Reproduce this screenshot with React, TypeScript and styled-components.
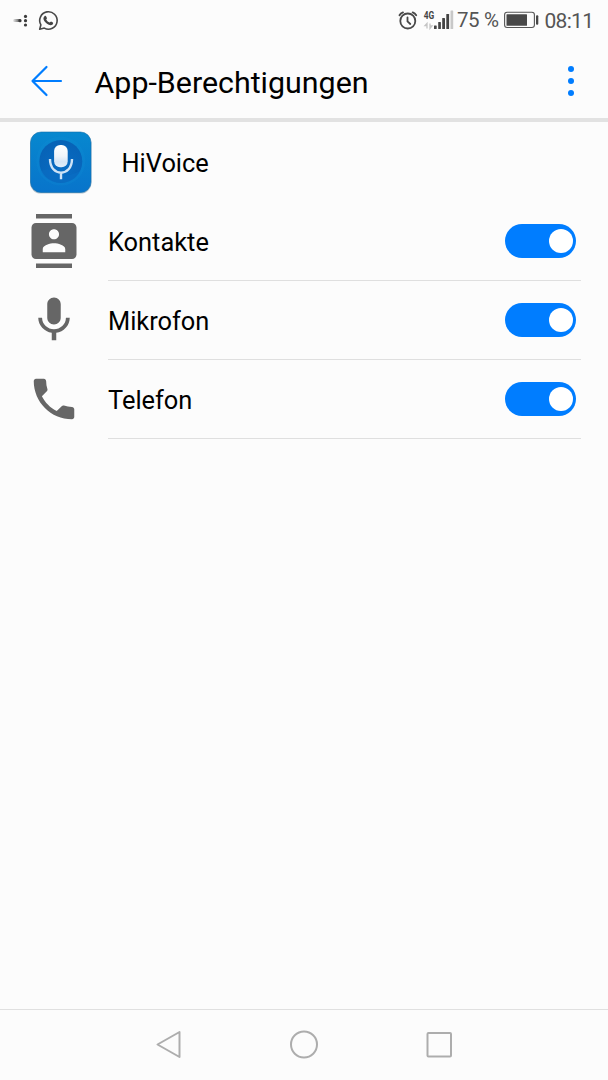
import React from 'react';
import styled, { createGlobalStyle } from 'styled-components';

const Global = createGlobalStyle`
  * { box-sizing: border-box; }
  body { margin: 0; background: #fcfcfc; font-family: Roboto, "Liberation Sans", sans-serif; color: #000; }
  svg { display: block; flex: none; }
`;

const Screen = styled.div`
  width: 608px;
  height: 1080px;
  display: flex;
  flex-direction: column;
  background: #fcfcfc;
  overflow: hidden;
`;

const StatusBar = styled.header`
  height: 42px;
  display: flex;
  justify-content: space-between;
`;

const StatusText = styled.span<{ $left: number; $width: number; $size: number; $top: number; $spacing: number }>`
  width: ${p => p.$width}px;
  margin-left: ${p => p.$left}px;
  padding-top: ${p => p.$top}px;
  font-size: ${p => p.$size}px;
  letter-spacing: ${p => p.$spacing}px;
  line-height: 24px;
  white-space: nowrap;
  color: #555;
`;

const StatusGroup = styled.div`
  display: flex;
`;

const TitleBar = styled.div`
  height: 80px;
  display: flex;
  align-items: center;
  border-bottom: 4px solid #e2e2e2;
  padding: 2px 32px 0 30px;
`;

const Title = styled.h1`
  flex: 1;
  margin: 4px 0 0 31.5px;
  font-size: 30.4px;
  line-height: 36px;
  font-weight: 400;
  white-space: nowrap;
`;

const IconButton = styled.button`
  border: 0;
  padding: 0;
  background: none;
`;

const AppRow = styled.section`
  height: 80px;
  display: flex;
  align-items: center;
  padding-left: 28px;
  gap: 27.5px;
`;

const Label = styled.span`
  padding-top: 2px;
  font-size: 25.4px;
  line-height: 30px;
  white-space: nowrap;
`;

const List = styled.ul`
  flex: 1;
  margin: 0;
  padding: 0;
  list-style: none;
`;

const Row = styled.li`
  height: 79px;
  display: flex;
  padding: 0 27px;
`;

const IconCell = styled.div<{ $top: number }>`
  width: 81px;
  padding-top: ${p => p.$top}px;
`;

const RowBody = styled.div`
  flex: 1;
  display: flex;
  align-items: center;
  justify-content: space-between;
  padding-right: 5px;
  border-bottom: 1px solid #dfdfdf;
`;

const Switch = styled.button`
  width: 71px;
  height: 34px;
  border: 0;
  border-radius: 17px;
  background: #007dff;
  padding: 0 3px;
  display: flex;
  align-items: center;
  justify-content: flex-end;
`;

const Knob = styled.span`
  width: 24px;
  height: 24px;
  border-radius: 50%;
  background: #fff;
`;

const NavBar = styled.nav`
  height: 71px;
  border-top: 1px solid #e0e0e0;
  padding-bottom: 2px;
  display: flex;
  justify-content: center;
  align-items: center;
  gap: 95px;
`;

const permissions = [
  {
    name: 'Kontakte',
    top: 12.3,
    path: 'M20 0H4v2h16V0zM4 24h16v-2H4v2zM20 4H4c-1.1 0-2 .9-2 2v12c0 1.1.9 2 2 2h16c1.1 0 2-.9 2-2V6c0-1.1-.9-2-2-2zm-8 2.75c1.24 0 2.25 1.01 2.25 2.25s-1.01 2.25-2.25 2.25S9.75 10.24 9.75 9 10.76 6.75 12 6.75zM17 17H7v-1.5c0-1.67 3.33-2.5 5-2.5s5 .83 5 2.5V17z',
  },
  {
    name: 'Mikrofon',
    top: 12,
    path: 'M12 14c1.66 0 2.99-1.34 2.99-3L15 5c0-1.66-1.34-3-3-3S9 3.34 9 5v6c0 1.66 1.34 3 3 3zm5.3-3c0 3-2.54 5.1-5.3 5.1S6.7 14 6.7 11H5c0 3.41 2.72 6.23 6 6.72V21h2v-3.28c3.28-.48 6-3.3 6-6.72h-1.7z',
  },
  {
    name: 'Telefon',
    top: 11.6,
    path: 'M6.62 10.79c1.44 2.83 3.76 5.14 6.59 6.59l2.2-2.2c.27-.27.67-.36 1.02-.24 1.12.37 2.33.57 3.57.57.55 0 1 .45 1 1V20c0 .55-.45 1-1 1-9.39 0-17-7.61-17-17 0-.55.45-1 1-1h3.5c.55 0 1 .45 1 1 0 1.25.2 2.45.57 3.57.11.35.03.74-.25 1.02l-2.2 2.2z',
  },
];

const Notifications = () => (
  <svg width="80" height="40" viewBox="0 0 80 40">
    <defs>
      <linearGradient id="trail">
        <stop offset="0" stopColor="#444" stopOpacity="0.1" />
        <stop offset="1" stopColor="#444" />
      </linearGradient>
    </defs>
    <rect x="13" y="19.1" width="8" height="3" rx="1.5" fill="url(#trail)" />
    <g fill="#3c3c3c">
      <circle cx="20" cy="20.7" r="1.6" />
      <circle cx="25.5" cy="16.4" r="1.6" />
      <circle cx="25.5" cy="20.7" r="1.6" />
      <circle cx="25.5" cy="25" r="1.6" />
    </g>
    <path d="M39.7 29.3l1.2-4.5a8.7 8.7 0 1 1 3.4 3.3z" fill="none" stroke="#484848" strokeWidth="1.6" strokeLinejoin="round" />
    <path d="M44.5 16.2c.7-.6 1.4-.4 1.7.2l.7 1.6c.2.6-.7 1.3-.7 1.6.8 1.5 2 2.5 3.4 3 .4.1 1-1.1 1.5-1l1.8.9c.6.4.1 1.8-.6 2.3-1.5 1-3.7.2-5.3-1-1.6-1.2-2.9-2.8-3.4-4.3-.4-1.3 0-2.5.9-3.3z" fill="#444" />
  </svg>
);

const AlarmAndSignal = () => (
  <svg width="65" height="40" viewBox="390 0 65 40">
    <g fill="none" stroke="#484848" strokeLinecap="round">
      <circle cx="407.8" cy="21" r="7.5" strokeWidth="1.8" />
      <path d="M399.5 15.2Q400.6 13.3 403 12.4M416.2 15.2Q415 13.3 412.7 12.4" strokeWidth="1.9" />
      <path d="M407.5 17.3V21.3L410.3 24" strokeWidth="1.8" />
    </g>
    <text x="423.7" y="18.8" fontFamily="Roboto, sans-serif" fontSize="10.5" fontWeight="700" fill="#444" textLength="10.5" lengthAdjust="spacingAndGlyphs">4G</text>
    <path d="M427 28.5V23.5L425 25.7H427M430 23.5V28.5L432 26H430" fill="none" stroke="#c4c4c4" strokeWidth="1.3" />
    <g fill="#444">
      <rect x="434" y="25.5" width="2.7" height="3.5" rx=".5" />
      <rect x="438.2" y="22" width="2.7" height="7" rx=".5" />
      <rect x="442.2" y="18" width="2.8" height="11" rx=".5" />
      <rect x="446.3" y="14" width="2.8" height="15" rx=".5" />
    </g>
    <rect x="450.5" y="10.5" width="2.7" height="18.5" rx=".5" fill="#c8c8c8" />
  </svg>
);

const Battery = () => (
  <svg width="36" height="40" viewBox="503 0 36 40">
    <rect x="504.6" y="12.3" width="29.8" height="15.2" rx="2.5" fill="none" stroke="#555" strokeWidth="1.1" />
    <rect x="506.5" y="14.2" width="20.5" height="11.6" rx=".5" fill="#484848" />
    <rect x="536" y="15.2" width="2.3" height="9.6" rx="1" fill="#484848" />
  </svg>
);

const AppIcon = () => (
  <svg width="66" height="66" viewBox="28 129 66 66">
    <defs>
      <linearGradient id="tile" x1="0" y1="0" x2="0" y2="1">
        <stop offset="0" stopColor="#0788cf" />
        <stop offset="1" stopColor="#0874cb" />
      </linearGradient>
      <radialGradient id="disc" cx=".55" cy=".7" r=".65">
        <stop offset="0" stopColor="#096cc3" />
        <stop offset="1" stopColor="#0763b7" />
      </radialGradient>
      <linearGradient id="mic" x1="0" y1="0" x2="0" y2="1">
        <stop offset="0" stopColor="#fff" />
        <stop offset=".5" stopColor="#f0f4fa" />
        <stop offset=".75" stopColor="#d6e5f5" />
        <stop offset="1" stopColor="#e2eef9" />
      </linearGradient>
    </defs>
    <rect x="30" y="132.6" width="61.5" height="61" rx="11" fill="#b7c4ce" />
    <rect x="30.5" y="132" width="60.5" height="60.5" rx="10.5" fill="url(#tile)" stroke="#1670ad" strokeWidth=".6" />
    <circle cx="60.8" cy="161" r="24.5" fill="#1591d6" opacity=".2" />
    <circle cx="60.8" cy="161.5" r="21.5" fill="url(#disc)" />
    <path d="M40.5 171Q49 167 56 173T80.5 171Q74 182.5 60.8 183 46 182 40.5 171z" fill="#0b72c8" opacity=".45" />
    <path d="M50 159C50 177.3 72 177.3 72 159M61 172.5V179.3" fill="none" stroke="#cfe3f6" strokeWidth="2.4" />
    <rect x="54.1" y="145" width="13.6" height="22.3" rx="6" fill="url(#mic)" />
  </svg>
);

export default function App() {
  return (
    <Screen>
      <Global />
      <StatusBar>
        <Notifications />
        <StatusGroup>
          <AlarmAndSignal />
          <StatusText $left={2} $width={46} $size={20.5} $top={8} $spacing={-0.4}>75 %</StatusText>
          <Battery />
          <StatusText $left={5.5} $width={63.5} $size={21} $top={9} $spacing={-0.7}>08:11</StatusText>
        </StatusGroup>
      </StatusBar>
      <TitleBar>
        <IconButton aria-label="Zurück">
          <svg width="33" height="34" viewBox="30 64 33 34">
            <path d="M46.5 67L32.5 81 46.5 95M32.5 81H61" fill="none" stroke="#007dff" strokeWidth="2.2" strokeLinecap="round" strokeLinejoin="round" />
          </svg>
        </IconButton>
        <Title>App-Berechtigungen</Title>
        <IconButton aria-label="Mehr">
          <svg width="10" height="34" viewBox="566 64 10 34" fill="#007dff">
            <circle cx="571" cy="69" r="3" />
            <circle cx="571" cy="81" r="3" />
            <circle cx="571" cy="93" r="3" />
          </svg>
        </IconButton>
      </TitleBar>
      <AppRow>
        <AppIcon />
        <Label>HiVoice</Label>
      </AppRow>
      <List>
        {permissions.map(p => (
          <Row key={p.name}>
            <IconCell $top={p.top}>
              <svg width="54" height="54" viewBox="0 0 24 24" fill="#666"><path d={p.path} /></svg>
            </IconCell>
            <RowBody>
              <Label>{p.name}</Label>
              <Switch role="switch" aria-checked="true" aria-label={p.name}><Knob /></Switch>
            </RowBody>
          </Row>
        ))}
      </List>
      <NavBar>
        <svg width="40" height="40" viewBox="149 1024 40 40"><path d="M157.5 1044.5L179.5 1032V1057z" fill="none" stroke="#adadad" strokeWidth="2" strokeLinejoin="round" /></svg>
        <svg width="40" height="40" viewBox="284 1024 40 40"><circle cx="304" cy="1044.5" r="13" fill="none" stroke="#adadad" strokeWidth="2" /></svg>
        <svg width="40" height="40" viewBox="419 1024 40 40"><rect x="427.5" y="1033" width="23.5" height="23.5" rx="1" fill="none" stroke="#adadad" strokeWidth="2" /></svg>
      </NavBar>
    </Screen>
  );
}
